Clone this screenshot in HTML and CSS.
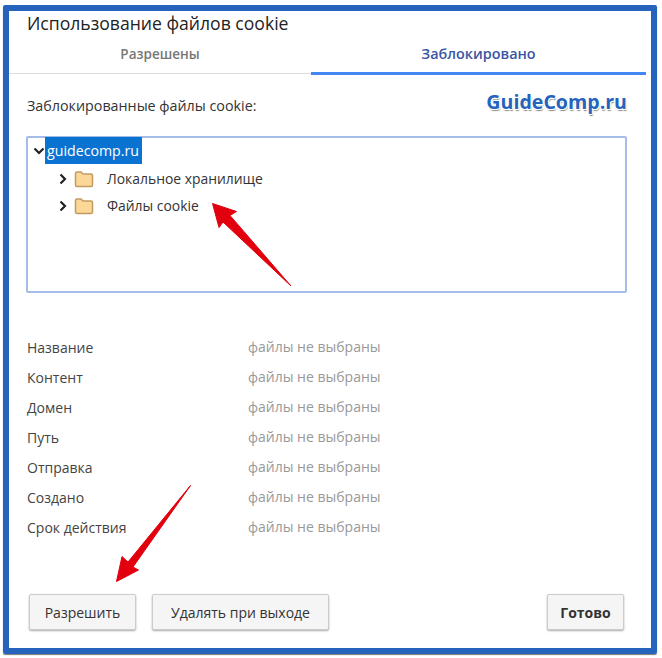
FILE: index.html
```html
<!DOCTYPE html>
<html lang="ru">
<head>
  <meta charset="UTF-8">
  <title>Использование файлов cookie</title>
  <link rel="stylesheet" href="styles.css">
</head>
<body>
<div class="frame">
  <h1 class="title">Использование файлов cookie</h1>
  <div class="tabs">
    <div class="tab">Разрешены</div>
    <div class="tab tab-active">Заблокировано</div>
  </div>
  <div class="content">
    <div class="list-head">
      <span>Заблокированные файлы cookie:</span>
      <span class="watermark">GuideComp.ru</span>
    </div>
    <div class="tree">
      <div class="tree-root">
        <svg class="chevron" width="12" height="12" viewBox="0 0 12 12"><path d="M1.500 3.500 6 8l4.500-4.500"/></svg>
        <span class="selected">guidecomp.ru</span>
      </div>
      <div class="tree-item">
        <svg class="chevron" width="12" height="12" viewBox="0 0 12 12"><path d="M3.500 1.500 8 6l-4.500 4.500"/></svg>
        <svg class="folder" width="20" height="18" viewBox="0 0 20 18"><path d="M1.500 15V3.500q0-1.500 1.500-1.500h4l2 2h8q1.500 0 1.500 1.500V15q0 1.500-1.500 1.500H3q-1.500 0-1.500-1.500z"/></svg>
        <span>Локальное хранилище</span>
      </div>
      <div class="tree-item">
        <svg class="chevron" width="12" height="12" viewBox="0 0 12 12"><path d="M3.500 1.500 8 6l-4.500 4.500"/></svg>
        <svg class="folder" width="20" height="18" viewBox="0 0 20 18"><path d="M1.500 15V3.500q0-1.500 1.500-1.500h4l2 2h8q1.500 0 1.500 1.500V15q0 1.500-1.500 1.500H3q-1.500 0-1.500-1.500z"/></svg>
        <span>Файлы cookie</span>
      </div>
    </div>
    <div class="details">
      <div class="detail-row"><span class="detail-name">Название</span><span class="detail-value">файлы не выбраны</span></div>
      <div class="detail-row"><span class="detail-name">Контент</span><span class="detail-value">файлы не выбраны</span></div>
      <div class="detail-row"><span class="detail-name">Домен</span><span class="detail-value">файлы не выбраны</span></div>
      <div class="detail-row"><span class="detail-name">Путь</span><span class="detail-value">файлы не выбраны</span></div>
      <div class="detail-row"><span class="detail-name">Отправка</span><span class="detail-value">файлы не выбраны</span></div>
      <div class="detail-row"><span class="detail-name">Создано</span><span class="detail-value">файлы не выбраны</span></div>
      <div class="detail-row"><span class="detail-name">Срок действия</span><span class="detail-value">файлы не выбраны</span></div>
    </div>
    <div class="buttons">
      <button class="btn btn-allow">Разрешить</button>
      <button class="btn btn-clear">Удалять при выходе</button>
      <button class="btn btn-done">Готово</button>
    </div>
  </div>
</div>
<svg class="arrows" width="662" height="658" viewBox="0 0 662 658">
  <path d="M212.500 203.500 236.500 211.500 230 215.500 291 286 223 222 219 227.500z"/>
  <path d="M116.500 581.500 122 556.500 128 562 190.500 485.500 133 567 138.500 570z"/>
</svg>
</body>
</html>
```

FILE: styles.css
```css
html, body {
  margin: 0;
  padding: 0;
  background: #fff;
}
body {
  position: relative;
  width: 662px;
  height: 658px;
  overflow: hidden;
  font-family: "Open Sans", "Noto Sans", sans-serif;
  color: #333;
}
.frame {
  box-sizing: border-box;
  width: 654px;
  height: 649px;
  margin: 5px 0 0 3px;
  border: 6px solid #2563bd;
  border-radius: 2px;
  box-shadow: 0 1px 1px #777;
  display: flex;
  flex-direction: column;
}
.title {
  margin: 0;
  padding: 0 0 0 18px;
  font-size: 17.600px;
  font-weight: 400;
  line-height: 24px;
  color: #222;
}
.tabs {
  display: flex;
  height: 38px;
  margin-right: 5px;
  border-bottom: 1px solid #ddd;
}
.tab {
  flex: 1;
  text-align: center;
  font-size: 13.500px;
  font-weight: 600;
  line-height: 38px;
  color: #777;
}
.tab-active {
  flex: 0 0 335px;
  height: 37px;
  border-bottom: 3px solid #4285f4;
  font-size: 14.400px;
  color: #3b55a5;
}
.content {
  flex: 1;
  padding: 0 24px 18px 18px;
  display: flex;
  flex-direction: column;
}
.list-head {
  display: flex;
  justify-content: space-between;
  align-items: center;
  height: 62px;
  font-size: 14.300px;
  color: #333;
}
.watermark {
  font-size: 19.600px;
  font-weight: 700;
  color: #2563bd;
  margin-top: -8px;
  text-shadow: 1px 1px 0 #fff, -1px -1px 0 #fff, 1px -1px 0 #fff, -1px 1px 0 #fff, 1px 2px 1px #888;
}
.tree {
  box-sizing: border-box;
  height: 157px;
  margin-left: -1px;
  border: 2px solid #a3bde8;
  border-radius: 2px;
  padding-left: 5px;
  font-size: 13.900px;
  color: #333;
}
.tree-root {
  display: flex;
  align-items: center;
  height: 27px;
  margin: -1px 0 1px;
}
.selected {
  background: #0a73d1;
  color: #fff;
  font-size: 14.200px;
  line-height: 27px;
  padding: 0 3px 0 2px;
}
.tree-item {
  display: flex;
  align-items: center;
  height: 27px;
  padding-left: 24px;
}
.chevron {
  flex: none;
  fill: none;
  stroke: #222;
  stroke-width: 2.200;
}
.folder {
  flex: none;
  margin: 0 13px 0 5px;
  fill: #fbd898;
  stroke: #c49a62;
  stroke-width: 1.500;
}
.details {
  margin-top: 40px;
}
.detail-row {
  display: flex;
  height: 30px;
  line-height: 30px;
  font-size: 14px;
}
.detail-name {
  flex: 0 0 221px;
  color: #444;
}
.detail-value {
  margin-top: -1px;
  color: #999;
}
.buttons {
  display: flex;
  gap: 16px;
  margin-top: auto;
  padding-left: 2px;
  padding-right: 3px;
}
.btn {
  height: 36px;
  padding: 0;
  font-family: inherit;
  font-size: 14px;
  color: #333;
  background: #f5f5f5;
  border: 1px solid #ccc;
  border-radius: 2px;
  box-shadow: 0 1px 2px #aaa;
}
.btn-allow {
  width: 107px;
}
.btn-clear {
  width: 177px;
}
.btn-done {
  width: 77px;
  margin-left: auto;
  font-weight: 700;
}
.arrows {
  position: absolute;
  left: 0;
  top: 0;
  fill: #e2000f;
  stroke: #e2000f;
  stroke-width: 1;
  stroke-linejoin: round;
  pointer-events: none;
}
```
